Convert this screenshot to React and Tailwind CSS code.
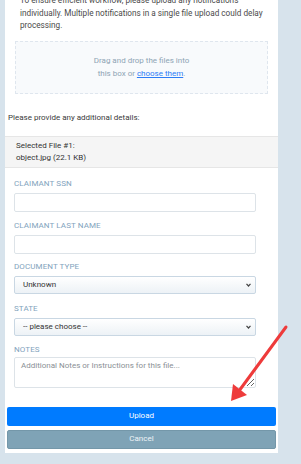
import React from 'react';

const Label = ({ children }) => (
  <div className="text-[8px] leading-[12px] text-[#82a3bd] uppercase tracking-[0.1px]">{children}</div>
);

const TextInput = () => (
  <input type="text" className="mt-[3px] block w-full h-[19px] rounded-[2px] border border-[#dde3e8] bg-white px-2 text-[8px] outline-none" />
);

const Select = ({ value, options }) => (
  <div className="relative mt-[3px]">
    <select
      defaultValue={value}
      className="block w-full h-[18px] appearance-none rounded-[2px] border border-[#c9d7e3] bg-gradient-to-b from-white to-[#edf2f6] pl-[8px] text-[8px] leading-[16px] text-[#333] outline-none"
    >
      {options.map((o) => (
        <option key={o}>{o}</option>
      ))}
    </select>
    <svg className="pointer-events-none absolute right-[5px] top-[7px]" width="5" height="4" viewBox="0 0 5 4">
      <path d="M0.5 0.8 L2.5 3 L4.5 0.8" fill="none" stroke="#444" strokeWidth="1.2" />
    </svg>
  </div>
);

export default function App() {
  return (
    <div className="relative w-[301px] h-[464px] overflow-hidden bg-[#d7e3ec]" style={{ fontFamily: 'Roboto, "Liberation Sans", sans-serif' }}>
      <div className="ml-[5px] w-[273px] h-[453px] bg-white flex flex-col">
        {/* intro text */}
        <p className="-mt-[6px] pl-[15px] text-[8.2px] leading-[12.5px] text-[#4a4a4a] whitespace-nowrap">
          To ensure efficient workflow, please upload any notifications
          <br />
          individually. Multiple notifications in a single file upload could delay
          <br />
          processing.
        </p>

        {/* drop zone */}
        <div className="mt-[9px] mx-[10px] h-[53px] border border-dashed border-[#dfe6ee] bg-[#f8fafc] flex flex-col items-center justify-center text-[8px] leading-[13px] text-[#8ea4b4]">
          <span>Drag and drop the files into</span>
          <span>
            this box or <a href="#" className="text-[#2d7cf6] underline">choose them</a>.
          </span>
        </div>

        <div className="mt-[18px] px-[3px] text-[8px] leading-[12px] text-[#3a3a3a]">Please provide any additional details:</div>

        {/* selected file */}
        <div className="mt-[12px] h-[32px] bg-[#f5f5f5] border-y border-[#e6e6e6] pl-[11px] pt-[3px] text-[8px] leading-[12px] text-[#333]">
          <div>Selected File #1:</div>
          <div>object.jpg (22.1 KB)</div>
        </div>

        {/* form */}
        <div className="px-[9px] pt-[10px] w-[260px]">
          <Label>Claimant SSN</Label>
          <TextInput />
          <div className="mt-[8px]">
            <Label>Claimant Last Name</Label>
            <TextInput />
          </div>
          <div className="mt-[7px]">
            <Label>Document Type</Label>
            <Select value="Unknown" options={['Unknown', 'Notice', 'Correspondence']} />
          </div>
          <div className="mt-[9px]">
            <Label>State</Label>
            <Select value="-- please choose --" options={['-- please choose --', 'Alabama', 'Alaska']} />
          </div>
          <div className="mt-[8px]">
            <Label>Notes</Label>
            <textarea
              placeholder="Additional Notes or Instructions for this file..."
              className="mt-[1px] block w-full h-[31px] rounded-[2px] border border-[#dde3e8] px-[6px] py-[2px] text-[8px] leading-[12px] placeholder:text-[#8a8f95] outline-none"
            />
          </div>
        </div>

        {/* buttons */}
        <div className="mt-[19px] px-[2px] flex flex-col gap-[4px]">
          <button className="h-[19px] w-full rounded-[2px] bg-[#007bff] text-[8px] text-white">Upload</button>
          <button className="h-[19px] w-full rounded-[2px] bg-[#7fa3b6] border border-[#7497a9] text-[8px] text-[#eef3f6]">Cancel</button>
        </div>
      </div>

      {/* red annotation arrow */}
      <svg className="absolute left-0 top-0 pointer-events-none" width="301" height="464" viewBox="0 0 301 464">
        <line x1="286" y1="327" x2="236" y2="395" stroke="#ee3b3b" strokeWidth="3" strokeLinecap="round" />
        <path d="M231 401 L233 384 L247 395 Z" fill="#ee3b3b" />
      </svg>
    </div>
  );
}
